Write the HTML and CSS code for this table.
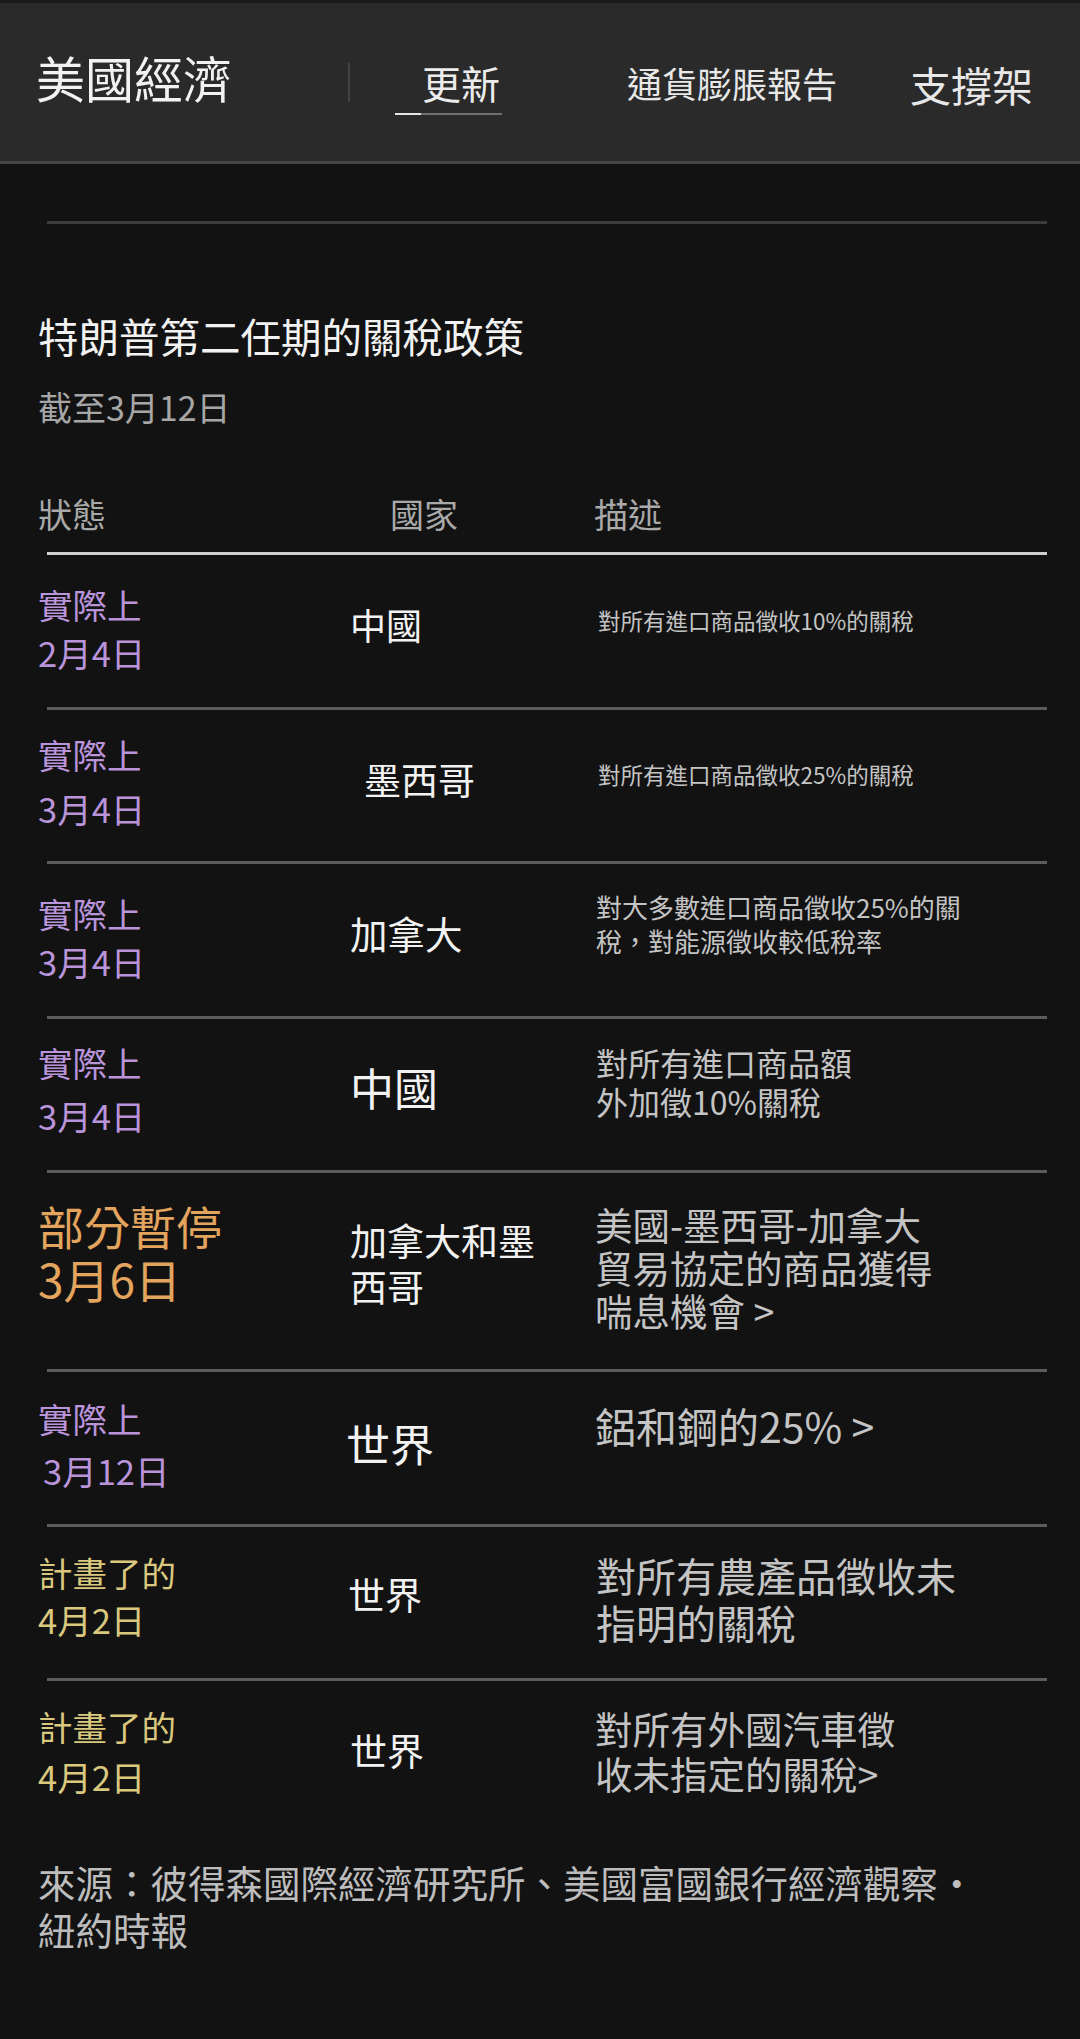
FILE: index.html
```html
<!DOCTYPE html>
<html lang="zh-Hant">
<head>
<meta charset="utf-8">
<title>美國經濟</title>
<link rel="stylesheet" href="styles.css">
</head>
<body>
<header class="topbar">
  <div class="brand">美國經濟</div>
  <div class="divider"></div>
  <div class="tab">
    <span class="tab-label">更新</span>
    <span class="tab-bar"><span class="tab-bar-fill"></span></span>
  </div>
  <div class="tab-plain tab-report">通貨膨脹報告</div>
  <div class="tab-plain tab-support">支撐架</div>
</header>

<main class="content">
  <div class="rule"></div>
  <h1 class="title">特朗普第二任期的關稅政策</h1>
  <p class="asof">截至3月12日</p>

  <div class="table">
    <div class="thead">
      <div class="th">狀態</div>
      <div class="th th-country">國家</div>
      <div class="th">描述</div>
    </div>

    <div class="row r1">
      <div class="status purple"><div>實際上</div><div>2月4日</div></div>
      <div class="country">中國</div>
      <div class="desc">對所有進口商品徵收10%的關稅</div>
    </div>

    <div class="row r2">
      <div class="status purple"><div>實際上</div><div>3月4日</div></div>
      <div class="country">墨西哥</div>
      <div class="desc">對所有進口商品徵收25%的關稅</div>
    </div>

    <div class="row r3">
      <div class="status purple"><div>實際上</div><div>3月4日</div></div>
      <div class="country">加拿大</div>
      <div class="desc"><div>對大多數進口商品徵收25%的關</div><div>稅，對能源徵收較低稅率</div></div>
    </div>

    <div class="row r4">
      <div class="status purple"><div>實際上</div><div>3月4日</div></div>
      <div class="country">中國</div>
      <div class="desc"><div>對所有進口商品額</div><div>外加徵10%關稅</div></div>
    </div>

    <div class="row r5">
      <div class="status orange"><div>部分暫停</div><div>3月6日</div></div>
      <div class="country"><div>加拿大和墨</div><div>西哥</div></div>
      <div class="desc"><div>美國-墨西哥-加拿大</div><div>貿易協定的商品獲得</div><div>喘息機會 &gt;</div></div>
    </div>

    <div class="row r6">
      <div class="status purple"><div>實際上</div><div class="date-indent">3月12日</div></div>
      <div class="country">世界</div>
      <div class="desc">鋁和鋼的25% &gt;</div>
    </div>

    <div class="row r7">
      <div class="status yellow"><div>計畫了的</div><div>4月2日</div></div>
      <div class="country">世界</div>
      <div class="desc"><div>對所有農產品徵收未</div><div>指明的關稅</div></div>
    </div>

    <div class="row r8">
      <div class="status yellow"><div>計畫了的</div><div>4月2日</div></div>
      <div class="country">世界</div>
      <div class="desc"><div>對所有外國汽車徵</div><div>收未指定的關稅&gt;</div></div>
    </div>
  </div>

  <div class="source"><div>來源：彼得森國際經濟研究所、美國富國銀行經濟觀察・</div><div>紐約時報</div></div>
</main>
</body>
</html>
```

FILE: styles.css
```css
* {
  box-sizing: border-box;
}

html,
body {
  margin: 0;
  padding: 0;
}

body {
  width: 1080px;
  min-height: 2039px;
  background: #121212;
  color: #f0f0f0;
  font-family: "Noto Sans CJK TC", "Noto Sans CJK SC", "Noto Sans", sans-serif;
}

/* ---------- top bar ---------- */
.topbar {
  display: flex;
  align-items: flex-start;
  height: 164px;
  background: #2a2a2a;
  border-top: 3px solid #1a1a1a;
  border-bottom: 3px solid #474747;
  padding-left: 36px;
}

.brand {
  font-size: 49px;
  line-height: 1;
  margin-top: 49px;
  color: #f2f2f2;
  white-space: nowrap;
}

.divider {
  width: 2px;
  height: 39px;
  margin-top: 60px;
  margin-left: 116px;
  background: #424242;
}

.tab {
  display: flex;
  flex-direction: column;
  width: 107px;
  margin-left: 45px;
  margin-top: 60px;
}

.tab-label {
  font-size: 39px;
  line-height: 1;
  margin-left: 27px;
  color: #ececec;
  white-space: nowrap;
}

.tab-bar {
  display: flex;
  height: 2px;
  margin-top: 11px;
  background: #707070;
}

.tab-bar-fill {
  width: 26px;
  background: #e6e6e6;
}

.tab-plain {
  line-height: 1;
  color: #e8e8e8;
  white-space: nowrap;
}

.tab-report {
  font-size: 35px;
  margin-left: 125px;
  margin-top: 62px;
}

.tab-support {
  font-size: 41px;
  margin-left: 73px;
  margin-top: 61px;
}

/* ---------- content ---------- */
.content {
  padding: 0 33px 0 38px;
}

.rule {
  height: 3px;
  margin-top: 57px;
  margin-left: 9px;
  background: #3c3c3c;
}

.title {
  margin: 88px 0 0;
  font-size: 40.5px;
  line-height: 48px;
  font-weight: 400;
  color: #f2f2f2;
}

.asof {
  margin: 27px 0 0;
  font-size: 34px;
  line-height: 40px;
  color: #a6a6a6;
}

/* ---------- table ---------- */
.table {
  margin-top: 67px;
}

.thead,
.row {
  display: grid;
  grid-template-columns: 312px 244px 1fr;
}

.thead {
  font-size: 34px;
  line-height: 40px;
  color: #a9a9a9;
  padding-bottom: 21px;
  background: linear-gradient(#cfcfcf, #cfcfcf) no-repeat 9px 100% / calc(100% - 9px) 3px;
}

.th-country {
  padding-left: 40px;
}

.row {
  align-items: center;
  box-sizing: content-box;
  height: 151.5px;
  padding-bottom: 3px;
  background: linear-gradient(#5c5c5c, #5c5c5c) no-repeat 9px 100% / calc(100% - 9px) 3px;
}

.row.r5 {
  height: 196px;
}

.row.r8 {
  background: none;
  padding-bottom: 0;
}

.status {
  font-size: 34.5px;
  line-height: 50px;
  white-space: nowrap;
}

.purple {
  color: #b994da;
}

.orange {
  color: #e3a45e;
}

.yellow {
  color: #d9c87e;
}

.date-indent {
  padding-left: 5px;
}

.country {
  font-size: 37px;
  line-height: 1.25;
  color: #f2f2f2;
  white-space: nowrap;
  padding-bottom: 13px;
}

.desc {
  color: #c4c4c4;
  white-space: nowrap;
  padding-left: 1px;
}

/* per-row tuning */
.r1 .status { line-height: 48px; padding-bottom: 5px; }
.r1 .country { font-size: 36px; padding-bottom: 13px; }
.r1 .desc { font-size: 22.5px; line-height: 1.3; padding-bottom: 20px; padding-left: 4px; }

.r2 .status { line-height: 54px; padding-bottom: 8px; }
.r2 .country { padding-left: 14px; padding-bottom: 13px; }
.r2 .desc { font-size: 22.5px; line-height: 1.3; padding-bottom: 21px; padding-left: 4px; }

.r3 .status { line-height: 48px; padding-bottom: 5px; }
.r3 .country { font-size: 37.5px; padding-bottom: 12px; }
.r3 .desc { font-size: 26px; line-height: 34px; padding-bottom: 32px; padding-left: 2px; }

.r4 .status { line-height: 53px; padding-bottom: 10px; }
.r4 .country { font-size: 44px; padding-bottom: 13px; }
.r4 .desc { font-size: 32px; line-height: 39px; padding-bottom: 24px; padding-left: 2px; }

.r5 .status { font-size: 46px; line-height: 53px; padding-bottom: 39px; }
.r5 .country { line-height: 46px; padding-bottom: 16px; }
.r5 .desc { font-size: 37.5px; line-height: 43px; padding-bottom: 10px; }

.r6 .status { line-height: 52px; padding-bottom: 7px; }
.r6 .country { font-size: 44px; margin-left: -4px; padding-bottom: 8px; }
.r6 .desc { font-size: 41px; line-height: 48px; padding-bottom: 46px; }

.r7 .status { line-height: 47px; padding-bottom: 12px; }
.r7 .country { margin-left: -2px; padding-bottom: 17px; }
.r7 .desc { font-size: 40px; line-height: 47px; padding-bottom: 7px; padding-left: 2px; }

.r8 .status { line-height: 50px; padding-bottom: 11px; }
.r8 .country { padding-bottom: 14px; }
.r8 .desc { font-size: 37.5px; line-height: 45px; padding-bottom: 14px; }

/* ---------- source ---------- */
.source {
  margin: 25px 0 0;
  font-size: 37.5px;
  line-height: 47px;
  color: #bdbdbd;
  white-space: nowrap;
}
```
